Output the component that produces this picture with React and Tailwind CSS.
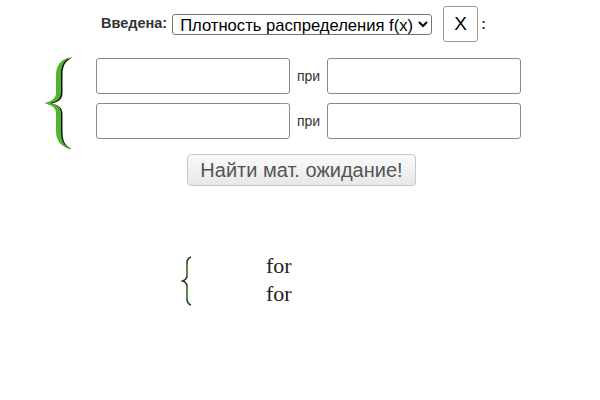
import React from 'react';

const BigBrace = () => (
  <svg width="28" height="92" viewBox="0 0 28 92" className="block">
    <path
      transform="translate(1.5,0.5)"
      fill="#111"
      d="M27,0 C17,2 12,8 12,18 L12,36 C12,42 6,45 0,46 C6,47 12,50 12,56 L12,74 C12,84 17,90 27,92 C20,89 17,84 17,74 L17,56 C17,50 12,47 6,46 C12,45 17,42 17,36 L17,18 C17,8 20,3 27,0 Z"
    />
    <path
      fill="#4fb52f"
      d="M27,0 C17,2 12,8 12,18 L12,36 C12,42 6,45 0,46 C6,47 12,50 12,56 L12,74 C12,84 17,90 27,92 C20,89 17,84 17,74 L17,56 C17,50 12,47 6,46 C12,45 17,42 17,36 L17,18 C17,8 20,3 27,0 Z"
    />
  </svg>
);

const SmallBrace = () => (
  <svg width="12" height="50" viewBox="0 0 12 50" className="block">
    <path
      d="M10,1 C7,2 6,4 6,7 L6,20 C6,23 4,24 1.5,25 C4,26 6,27 6,30 L6,43 C6,46 7,48 10,49"
      fill="none"
      stroke="#333"
      strokeWidth="1.6"
    />
    <path d="M6,8 L6,20 M6,30 L6,42" fill="none" stroke="#4caf32" strokeWidth="1.2" />
  </svg>
);

const Field = () => (
  <input
    type="text"
    className="w-[194px] h-[36px] border border-[#8a8a8a] rounded-[3px] bg-white"
  />
);

const Row = () => (
  <div className="flex items-center">
    <Field />
    <span className="mx-[7px] text-[14px] text-[#333]">при</span>
    <Field />
  </div>
);

export default function App() {
  return (
    <div className="w-[600px] h-[400px] bg-white font-['Liberation_Sans',Arial,sans-serif] text-[#222]">
      {/* top line */}
      <div className="flex items-center pt-[4px] pl-[101px] h-[40px] box-content">
        <span className="text-[14.5px] font-bold text-[#333] mr-[5px]">Введена:</span>
        <select className="w-[260px] h-[21px] border border-[#767676] rounded-[3px] bg-white text-[16.6px] text-black pl-[3px] pr-[2px] leading-none">
          <option>Плотность распределения f(x)</option>
        </select>
        <div className="ml-[11px] w-[35px] h-[36px] border border-[#999] rounded-[3px] flex items-center justify-center text-[19px] text-black">
          X
        </div>
        <span className="ml-[3px] text-[14px] font-bold text-[#333]">:</span>
      </div>

      {/* system of inputs */}
      <div className="flex items-start mt-[14px] pl-[44px]">
        <div className="mt-[-1px]">
          <BigBrace />
        </div>
        <div className="flex flex-col gap-[9px] ml-[24px]">
          <Row />
          <Row />
        </div>
      </div>

      {/* button */}
      <div className="flex justify-center mt-[5px] pl-[3px]">
        <button className="w-[229px] h-[32px] border border-[#c8c8c8] rounded-[4px] bg-gradient-to-b from-[#fafafa] to-[#e8e8e8] text-[20px] text-[#555]">
          Найти мат. ожидание!
        </button>
      </div>

      {/* result */}
      <div className="flex items-start mt-[70px] pl-[181px]">
        <SmallBrace />
        <div className="ml-[73px] mt-[-4px] font-['Liberation_Serif','Times_New_Roman',serif] text-[22px] text-[#222] leading-[28px]">
          <div>for</div>
          <div>for</div>
        </div>
      </div>
    </div>
  );
}
